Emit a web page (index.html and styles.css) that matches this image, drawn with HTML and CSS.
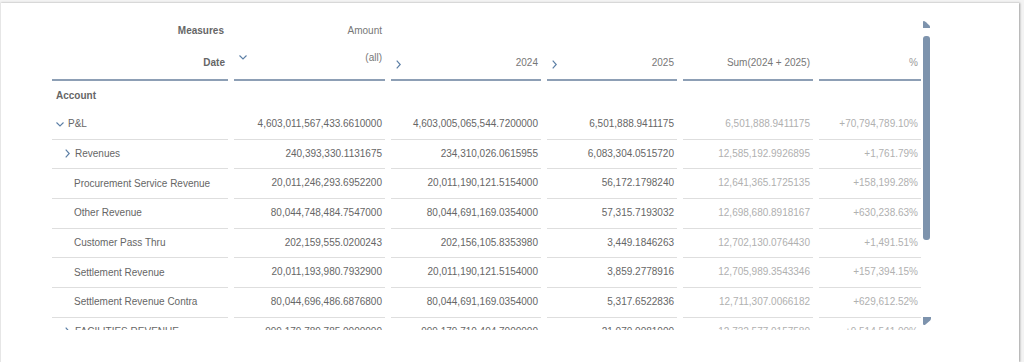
FILE: index.html
```html
<!DOCTYPE html>
<html>
<head>
<meta charset="utf-8">
<link rel="stylesheet" href="styles.css">
</head>
<body>
<div class="panel">
  <div class="viewport">
    <div class="table">
      <div class="row hdr1">
        <div class="cell label bold">Measures</div>
        <div class="cell num">Amount</div>
        <div class="cell"></div>
        <div class="cell"></div>
        <div class="cell"></div>
        <div class="cell"></div>
      </div>
      <div class="row hdr2">
        <div class="cell hc right"><span class="bold">Date</span></div>
        <div class="cell hc split">
          <svg class="chev-down" width="8" height="5" viewBox="0 0 8 5"><path d="M0.5 0.5 L4 4 L7.5 0.5" fill="none" stroke="#5c7fa6" stroke-width="1.1"/></svg>
          <span class="all">(all)</span>
        </div>
        <div class="cell hc split">
          <svg class="chev-right" width="5" height="9" viewBox="0 0 5 9"><path d="M0.7 0.7 L4.2 4.5 L0.7 8.3" fill="none" stroke="#5c7fa6" stroke-width="1.2"/></svg>
          <span>2024</span>
        </div>
        <div class="cell hc split">
          <svg class="chev-right" width="5" height="9" viewBox="0 0 5 9"><path d="M0.7 0.7 L4.2 4.5 L0.7 8.3" fill="none" stroke="#5c7fa6" stroke-width="1.2"/></svg>
          <span>2025</span>
        </div>
        <div class="cell hc right"><span>Sum(2024 + 2025)</span></div>
        <div class="cell hc right"><span class="pct-h">%</span></div>
      </div>
      <div class="row acct">
        <div class="cell label bold">Account</div>
        <div class="cell"></div><div class="cell"></div><div class="cell"></div><div class="cell"></div><div class="cell"></div>
      </div>

      <div class="row data">
        <div class="cell label lvl0"><svg class="tw-down" width="8" height="5" viewBox="0 0 8 5"><path d="M0.5 0.5 L4 4 L7.5 0.5" fill="none" stroke="#5c7fa6" stroke-width="1.1"/></svg>P&amp;L</div>
        <div class="cell num">4,603,011,567,433.6610000</div>
        <div class="cell num">4,603,005,065,544.7200000</div>
        <div class="cell num">6,501,888.9411175</div>
        <div class="cell num light">6,501,888.9411175</div>
        <div class="cell num light">+70,794,789.10%</div>
      </div>
      <div class="row data">
        <div class="cell label lvl1"><svg class="tw-right" width="5" height="9" viewBox="0 0 5 9"><path d="M0.7 0.7 L4.2 4.5 L0.7 8.3" fill="none" stroke="#5c7fa6" stroke-width="1.2"/></svg>Revenues</div>
        <div class="cell num">240,393,330.1131675</div>
        <div class="cell num">234,310,026.0615955</div>
        <div class="cell num">6,083,304.0515720</div>
        <div class="cell num light">12,585,192.9926895</div>
        <div class="cell num light">+1,761.79%</div>
      </div>
      <div class="row data">
        <div class="cell label lvl2">Procurement Service Revenue</div>
        <div class="cell num">20,011,246,293.6952200</div>
        <div class="cell num">20,011,190,121.5154000</div>
        <div class="cell num">56,172.1798240</div>
        <div class="cell num light">12,641,365.1725135</div>
        <div class="cell num light">+158,199.28%</div>
      </div>
      <div class="row data">
        <div class="cell label lvl2">Other Revenue</div>
        <div class="cell num">80,044,748,484.7547000</div>
        <div class="cell num">80,044,691,169.0354000</div>
        <div class="cell num">57,315.7193032</div>
        <div class="cell num light">12,698,680.8918167</div>
        <div class="cell num light">+630,238.63%</div>
      </div>
      <div class="row data">
        <div class="cell label lvl2">Customer Pass Thru</div>
        <div class="cell num">202,159,555.0200243</div>
        <div class="cell num">202,156,105.8353980</div>
        <div class="cell num">3,449.1846263</div>
        <div class="cell num light">12,702,130.0764430</div>
        <div class="cell num light">+1,491.51%</div>
      </div>
      <div class="row data">
        <div class="cell label lvl2">Settlement Revenue</div>
        <div class="cell num">20,011,193,980.7932900</div>
        <div class="cell num">20,011,190,121.5154000</div>
        <div class="cell num">3,859.2778916</div>
        <div class="cell num light">12,705,989.3543346</div>
        <div class="cell num light">+157,394.15%</div>
      </div>
      <div class="row data">
        <div class="cell label lvl2">Settlement Revenue Contra</div>
        <div class="cell num">80,044,696,486.6876800</div>
        <div class="cell num">80,044,691,169.0354000</div>
        <div class="cell num">5,317.6522836</div>
        <div class="cell num light">12,711,307.0066182</div>
        <div class="cell num light">+629,612.52%</div>
      </div>
      <div class="row data">
        <div class="cell label lvl1"><svg class="tw-right" width="5" height="9" viewBox="0 0 5 9"><path d="M0.7 0.7 L4.2 4.5 L0.7 8.3" fill="none" stroke="#5c7fa6" stroke-width="1.2"/></svg>FACILITIES REVENUE</div>
        <div class="cell num">999,179,789,785.0000000</div>
        <div class="cell num">999,179,710,404.7000000</div>
        <div class="cell num">21,070.0081000</div>
        <div class="cell num light">12,732,577.0157580</div>
        <div class="cell num light">+9,514,541.00%</div>
      </div>
    </div>

    <div class="scrollbar">
      <svg class="sb-up" width="7" height="7" viewBox="0 0 7 7"><path d="M0.5 0 Q1.5 0 3 1.2 L6.5 4.5 Q7 5 7 6 V7 H0 V0.8 Q0 0 0.5 0 Z" fill="#7d93ad"/></svg>
      <div class="thumb"></div>
      <svg class="sb-down" width="8" height="8" viewBox="0 0 8 8"><path d="M0 0 H8 V1.5 Q8 2.5 7.2 3.4 L2.5 7.5 Q2 8 1.2 8 Q0 8 0 7 Z" fill="#7d93ad"/></svg>
    </div>
  </div>
</div>
</body>
</html>
```

FILE: styles.css
```css
html, body {
  margin: 0;
  padding: 0;
}
body {
  background: #f3f3f3;
  width: 1024px;
  height: 362px;
  overflow: hidden;
  font-family: "Liberation Sans", Arial, sans-serif;
  font-size: 10px;
  color: #666;
}
.panel {
  margin-top: 3px;
  width: 1019px;
  height: 359px;
  background: #fff;
  border-left: 1px solid #e6e6e6;
  box-sizing: border-box;
  box-shadow: 1px 0 2px rgba(0, 0, 0, 0.35);
}
.viewport {
  height: 327px;
  overflow: hidden;
  padding: 14px 0 0 51px;
  box-sizing: border-box;
  display: flex;
}
.table {
  display: flex;
  flex-direction: column;
}
.row {
  display: grid;
  grid-template-columns: 176px 151px 150px 130px 130px 102px;
  column-gap: 6px;
}
.cell {
  box-sizing: border-box;
  white-space: nowrap;
  overflow: hidden;
}
.bold {
  font-weight: bold;
  color: #666;
}
.num {
  text-align: right;
  padding-right: 3px;
  color: #666;
}
.num.light {
  color: #b0b0b0;
}
.label {
  padding-left: 4px;
}
.hdr1 .cell {
  height: 26px;
  line-height: 27px;
}
.hdr1 .label {
  text-align: right;
  padding-right: 4px;
}
.hdr1 .num {
  color: #777;
}
.hdr2 .cell {
  height: 38px;
  border-bottom: 2px solid #8d9fb5;
  color: #777;
}
.hc {
  padding: 14px 3px 0 5px;
  line-height: 12px;
}
.hc.right {
  text-align: right;
}
.hc.split {
  display: flex;
  justify-content: space-between;
  align-items: flex-start;
}
.hc .all {
  margin-top: -5px;
}
.chev-down {
  margin-top: -2px;
}
.chev-right {
  margin-top: 3px;
}
.pct-h {
  color: #999;
}
.acct .cell {
  height: 29px;
  line-height: 29px;
}
.data .cell {
  height: 29.67px;
  line-height: 28px;
  border-bottom: 1px solid #dedede;
}
.data .label {
  color: #666;
  display: flex;
  align-items: center;
}
.lvl0 {
  padding-left: 4px;
}
.lvl1 {
  padding-left: 13px;
}
.lvl2 {
  padding-left: 22px;
}
.tw-down {
  margin-right: 4px;
  margin-top: 1px;
}
.tw-right {
  margin-right: 5px;
}
.scrollbar {
  margin-left: 2px;
  width: 8px;
  display: flex;
  flex-direction: column;
  align-items: flex-start;
  padding: 4px 0 5px 0;
  box-sizing: border-box;
}
.thumb {
  margin-top: 8px;
  width: 7px;
  height: 204px;
  background: #7d93ad;
  border-radius: 3px;
}
.sb-down {
  margin-top: auto;
}
```
